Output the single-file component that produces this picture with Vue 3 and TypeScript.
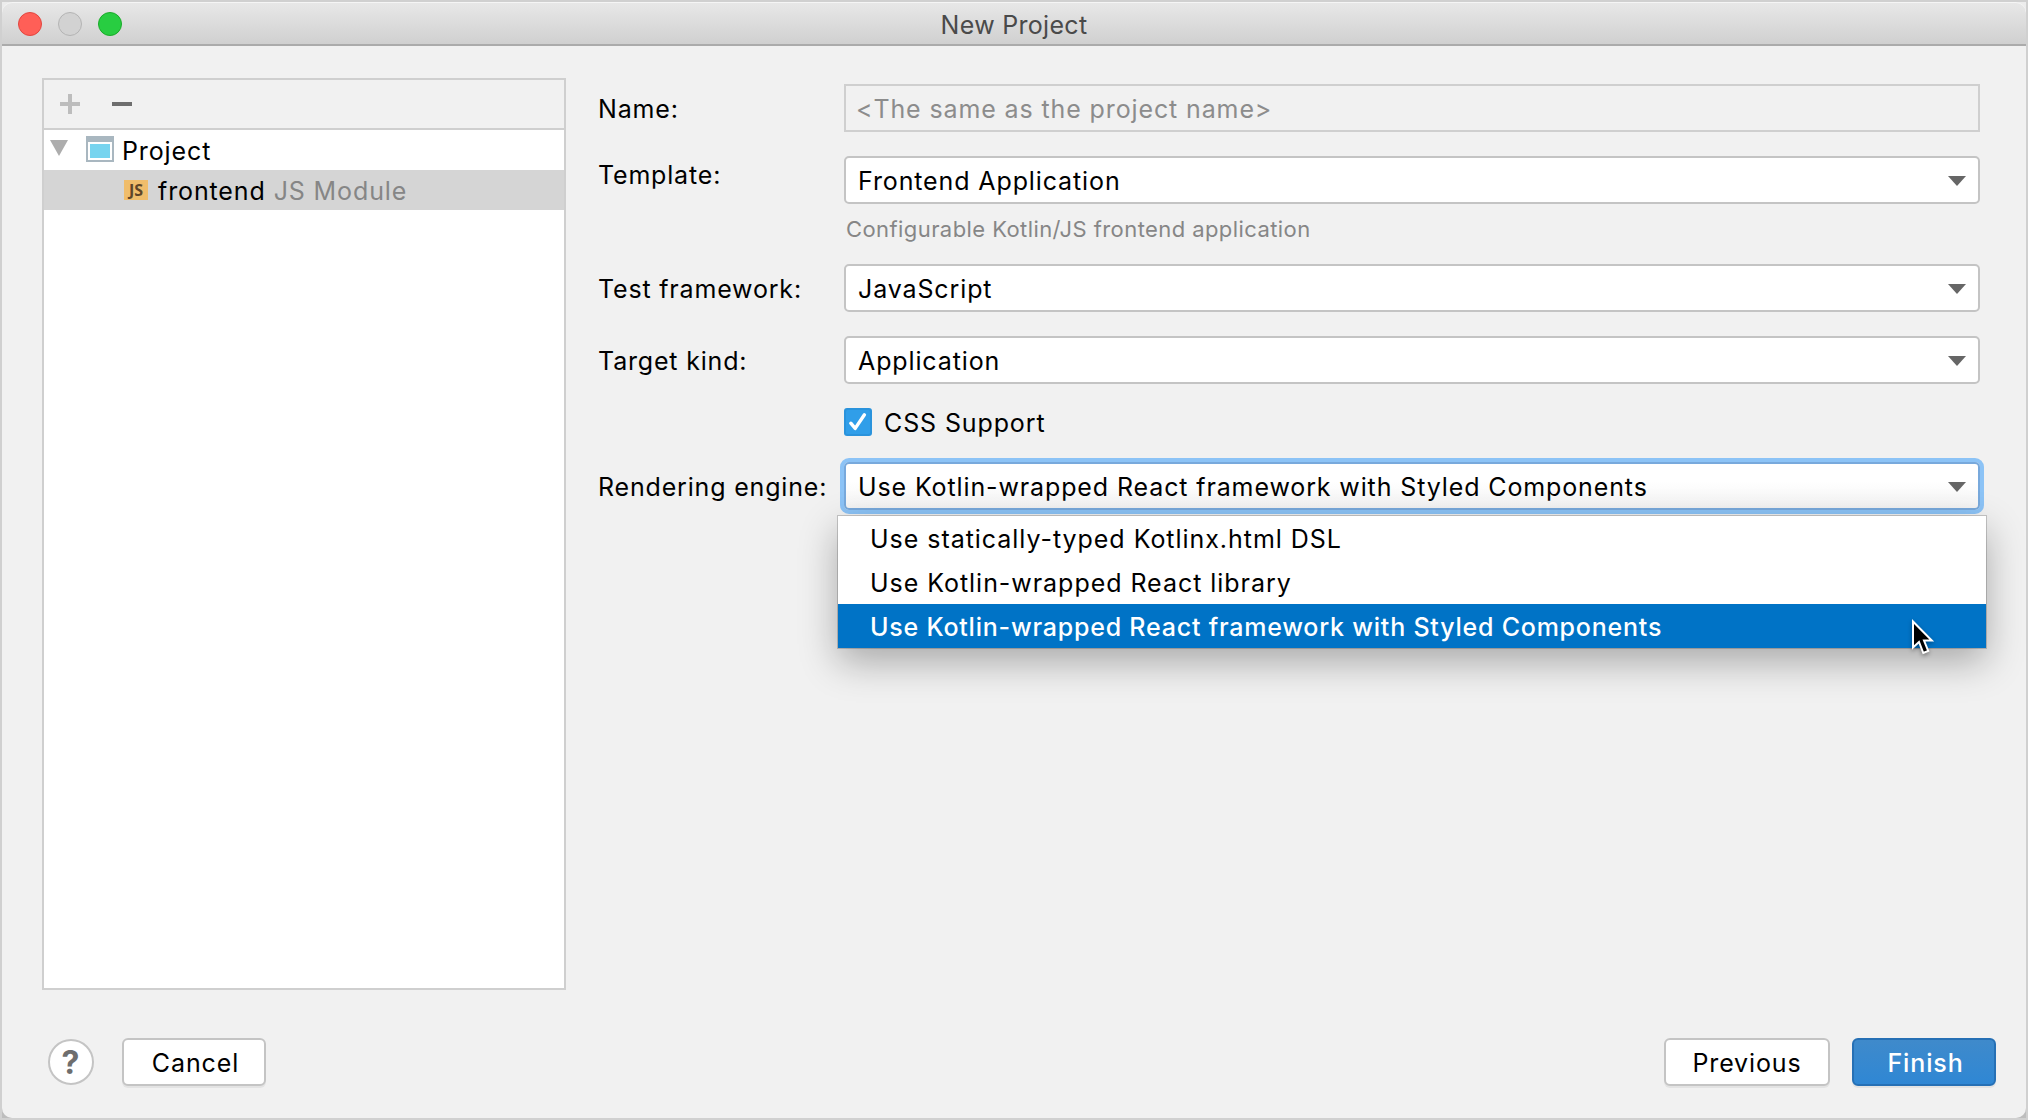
<script setup lang="ts">
interface Option {
  label: string
  selected: boolean
}

const engines: Option[] = [
  { label: 'Use statically-typed Kotlinx.html DSL', selected: false },
  { label: 'Use Kotlin-wrapped React library', selected: false },
  { label: 'Use Kotlin-wrapped React framework with Styled Components', selected: true },
]
</script>

<template>
  <div class="desktop">
    <div class="window">
      <header class="titlebar">
        <div class="lights">
          <span class="light close"></span>
          <span class="light minimize"></span>
          <span class="light maximize"></span>
        </div>
        <span class="title">New Project</span>
      </header>

      <main class="content">
        <section class="tree">
          <div class="toolbar">
            <svg width="20" height="20" viewBox="0 0 20 20"><path d="M8 0h4v8h8v4h-8v8H8v-8H0V8h8z" fill="#bdbdbd" /></svg>
            <svg width="20" height="20" viewBox="0 0 20 20"><path d="M0 8h20v4H0z" fill="#6e6e6e" /></svg>
          </div>
          <div class="row project">
            <svg class="twisty" width="18" height="16" viewBox="0 0 18 16"><path d="M0 0h18L9 16z" fill="#adadad" /></svg>
            <svg class="folder" width="28" height="26" viewBox="0 0 28 26">
              <path d="M0 0h28v26H0z" fill="#a9b7c0" />
              <path d="M2 6h24v18H2z" fill="#fff" />
              <path d="M4 8h20v14H4z" fill="#77d4ef" />
            </svg>
            <span class="text">Project</span>
          </div>
          <div class="row module">
            <span class="js">JS</span>
            <span class="text">frontend</span>
            <span class="text kind">JS Module</span>
          </div>
        </section>

        <section class="form">
          <div class="field">
            <label>Name:</label>
            <div class="input"><span class="text">&lt;The same as the project name&gt;</span></div>
          </div>
          <div class="field template">
            <label>Template:</label>
            <div class="select">
              <span class="text">Frontend Application</span>
              <svg class="arrow" width="18" height="10" viewBox="0 0 18 10"><path d="M0 0h18L9 10z" /></svg>
            </div>
          </div>
          <p class="hint">Configurable Kotlin/JS frontend application</p>
          <div class="field test">
            <label>Test framework:</label>
            <div class="select">
              <span class="text">JavaScript</span>
              <svg class="arrow" width="18" height="10" viewBox="0 0 18 10"><path d="M0 0h18L9 10z" /></svg>
            </div>
          </div>
          <div class="field target">
            <label>Target kind:</label>
            <div class="select">
              <span class="text">Application</span>
              <svg class="arrow" width="18" height="10" viewBox="0 0 18 10"><path d="M0 0h18L9 10z" /></svg>
            </div>
          </div>
          <div class="check">
            <svg width="28" height="28" viewBox="0 0 28 28">
              <rect width="28" height="28" rx="3" fill="#2a93dc" />
              <rect x="2" y="2" width="24" height="24" rx="1.5" fill="#309ee9" />
              <path d="M6.8 15.2l4.4 5.200L20.400 6.800" fill="none" stroke="#fff" stroke-width="3.4" stroke-linecap="round" stroke-linejoin="round" />
            </svg>
            <span class="text">CSS Support</span>
          </div>
          <div class="field engine">
            <label>Rendering engine:</label>
            <div class="select focused">
              <span class="text">Use Kotlin-wrapped React framework with Styled Components</span>
              <svg class="arrow" width="18" height="10" viewBox="0 0 18 10"><path d="M0 0h18L9 10z" /></svg>
              <ul class="popup">
                <li v-for="option in engines" :key="option.label" :class="{ selected: option.selected }">{{ option.label }}</li>
              </ul>
              <svg class="cursor" width="26" height="42" viewBox="0 0 26 42">
                <path d="M2 3.500v26l6-5.500L12.300 35l4.900-2L13 22.500h7.800z" fill="#000" stroke="#fff" stroke-width="2" />
              </svg>
            </div>
          </div>
        </section>
      </main>

      <footer class="footer">
        <button class="help">?</button>
        <button class="button cancel">Cancel</button>
        <span class="spacer"></span>
        <button class="button previous">Previous</button>
        <button class="button finish">Finish</button>
      </footer>
    </div>
  </div>
</template>

<style>
body {
  background: #d0d0d0;
}
</style>

<style scoped>
* {
  box-sizing: border-box;
}
.desktop {
  width: 2028px;
  height: 1120px;
  border: 2px solid #d0d0d0;
  background: linear-gradient(#ececec 50%, #bdbdbd 50%);
}
.window {
  height: 1116px;
  border-radius: 10px;
  background: #f1f1f1;
  color: #000;
  font-family: Inter, sans-serif;
  font-size: 25px;
  letter-spacing: 0.88px;
  line-height: 30px;
  white-space: nowrap;
  overflow: hidden;
  display: flex;
  flex-direction: column;
}
.titlebar {
  height: 44px;
  flex: none;
  padding-top: 3px;
  border-radius: 10px 10px 0 0;
  background: linear-gradient(#e8e8e8, #d0d0d0);
  border-bottom: 2px solid #ababab;
  box-shadow: inset 0 1px 0 #f5f5f5;
  display: flex;
  align-items: center;
  justify-content: center;
  color: #4a4a4a;
  letter-spacing: 0.3px;
}
.lights {
  position: absolute;
  left: 18px;
  top: 12px;
  display: flex;
  gap: 16px;
}
.light {
  width: 24px;
  height: 24px;
  border-radius: 50%;
  border: 1px solid #b4b4b4;
  background: #d2d2d2;
}
.close { background: #ff5f57; border-color: #e2463f; }
.maximize { background: #28cd41; border-color: #1aab29; }
.content {
  display: flex;
  height: 944px;
  padding: 32px 46px 0 40px;
}
.tree {
  width: 524px;
  height: 912px;
  flex: none;
  border: 2px solid #cfcfcf;
  background: #fff;
}
.toolbar {
  height: 50px;
  border-bottom: 2px solid #cfcfcf;
  background: #f1f1f1;
  display: flex;
  align-items: center;
  gap: 32px;
  padding-left: 16px;
}
.row {
  height: 40px;
  display: flex;
  align-items: center;
}
.text { padding-top: 2px; }
.project { padding-left: 6px; }
.twisty { margin: 0 18px 4px 0; }
.folder { margin: 0 8px 2px 0; }
.module { padding-left: 80px; background: #d5d5d5; }
.js {
  width: 24px;
  height: 20px;
  margin-right: 10px;
  background: #f0bd6b;
  color: #5f4628;
  font: 700 16px/20px "Open Sans", sans-serif;
  letter-spacing: 0;
  text-align: center;
}
.kind { margin-left: 8px; color: #868686; }
.form {
  flex: 1;
  margin-left: 32px;
  padding-top: 6px;
}
.field {
  height: 48px;
  display: flex;
}
label {
  width: 246px;
  flex: none;
  line-height: 50px;
  letter-spacing: 0.82px;
}
.input,
.select {
  flex: 1;
  height: 48px;
  border: 2px solid #c4c4c4;
  display: flex;
  align-items: center;
}
.input { border-color: #cfcfcf; padding-left: 10px; color: #8c8c8c; }
.select {
  position: relative;
  background: #fff;
  border-radius: 5px;
  padding: 0 12px;
  justify-content: space-between;
}
.arrow { fill: #666; margin-top: 1px; }
.template { margin-top: 24px; }
.template label { line-height: 38px; }
.hint {
  margin: 10px 0 0 248px;
  font-size: 22px;
  letter-spacing: 0.42px;
  color: #868686;
  line-height: 30px;
}
.test { margin-top: 20px; }
.target { margin-top: 24px; }
.check {
  display: flex;
  align-items: center;
  gap: 12px;
  margin: 24px 0 0 246px;
  height: 28px;
}
.engine { margin-top: 26px; }
.focused {
  border-color: #78a9dc;
  background: linear-gradient(#fff 40%, #f4f4f4);
  box-shadow: 0 0 0 4px #8cc3f6;
}
.popup {
  position: absolute;
  left: -8px;
  top: 52px;
  width: 1148px;
  margin: 0;
  padding: 0;
  list-style: none;
  background: #fff;
  box-shadow: 0 0 0 1px rgba(0, 0, 0, 0.18), 0 14px 36px rgba(0, 0, 0, 0.3);
}
.popup li {
  height: 44px;
  line-height: 46px;
  padding-left: 32px;
  letter-spacing: 0.96px;
}
.popup .selected {
  background: #0073c6;
  color: #fff;
  font-weight: 500;
  letter-spacing: 0.78px;
}
.cursor {
  position: absolute;
  left: 1065px;
  top: 154px;
  filter: drop-shadow(0 2px 2px rgba(0, 0, 0, 0.35));
}
.footer {
  flex: 1;
  display: flex;
  align-items: flex-start;
  padding: 48px 30px 0 46px;
}
button {
  height: 48px;
  padding: 1px 0 0;
  border: 2px solid #c4c4c4;
  background: #fff;
  color: #000;
  font: inherit;
  letter-spacing: inherit;
}
.button { border-radius: 6px; box-shadow: 0 2px 0 #e3e3e3; }
.help {
  width: 46px;
  height: 46px;
  margin: 1px 28px 0 0;
  border-radius: 50%;
  color: #6e6e6e;
  font-weight: 700;
  font-size: 32px;
}
.cancel { width: 144px; padding-left: 3px; }
.spacer { flex: 1; }
.previous { width: 166px; margin-right: 22px; }
.finish {
  width: 144px;
  padding-left: 3px;
  border-color: #2670b5;
  background: linear-gradient(#3f8acb, #2f87d4);
  color: #fff;
  font-weight: 500;
}
</style>
